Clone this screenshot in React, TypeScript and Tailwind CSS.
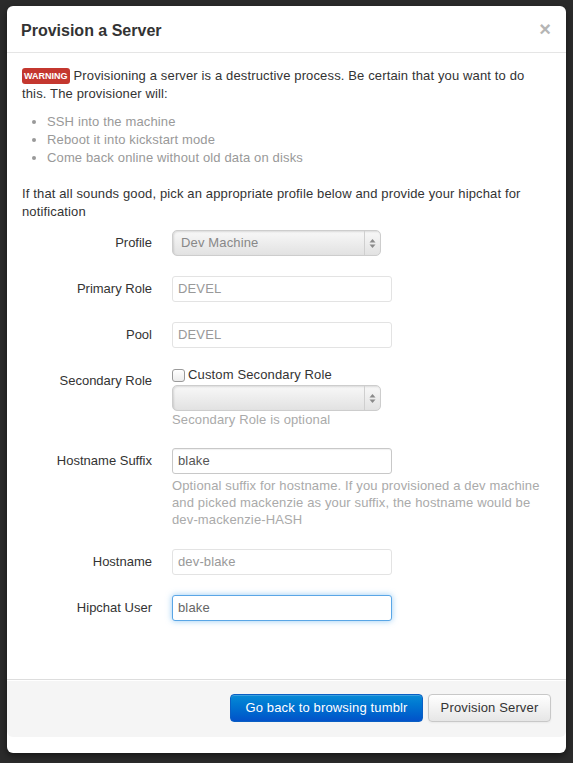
import React from "react";

const font = "font-['Liberation_Sans',Arial,sans-serif]";

interface RowProps {
  label: string;
  labelPad?: string;
  className?: string;
  children: React.ReactNode;
}

const Row = ({ label, labelPad = "pt-[4px]", className = "", children }: RowProps) => (
  <div className={`flex ${className}`}>
    <div className={`w-[130px] shrink-0 text-right leading-[18px] tracking-normal text-[#333] ${labelPad}`}>{label}</div>
    <div className="ml-[20px] w-[379px]">{children}</div>
  </div>
);

const SelectBox = ({ value }: { value?: string }) => (
  <div className="flex h-[26px] w-[209px] items-stretch rounded-[5px] border border-[#cdcdcd] bg-gradient-to-b from-[#f8f8f8] to-[#e2e2e2] shadow-[inset_1px_1px_2px_rgba(0,0,0,0.12)]">
    <div className="flex flex-1 items-center pl-[8px] text-[13px] text-[#888]">{value}</div>
    <div className="flex w-[16px] items-center justify-center border-l border-[#cfcfcf]">
      <svg width="7" height="11" viewBox="0 0 7 11">
        <path d="M3.5 1 L6.5 4.5 L0.5 4.5 Z" fill="#8a8a8a" />
        <path d="M3.5 10 L6.5 6.5 L0.5 6.5 Z" fill="#8a8a8a" />
      </svg>
    </div>
  </div>
);

const Field = ({ value, tone = "muted" }: { value: string; tone?: "muted" | "normal" | "focus" }) => {
  const styles = {
    muted: "border-[#e3e3e3] text-[#999]",
    normal: "border-[#c8c8c8] text-[#555] shadow-[inset_0_1px_1px_rgba(0,0,0,0.06)]",
    focus: "border-[#5aa6e6] text-[#666] shadow-[0_0_6px_rgba(82,168,236,0.6)]",
  }[tone];
  return (
    <div className={`flex h-[26px] w-[220px] items-center rounded-[3px] border bg-white px-[5px] text-[13px] ${styles}`}>
      {value}
    </div>
  );
};

export default function App() {
  return (
    <div className={`min-h-[763px] bg-[#2b2b2b] pl-[7px] pt-[6px] text-[13px] ${font}`}>
      <div className="w-[559px] rounded-[6px] bg-white pb-[16px] shadow-[0_3px_7px_rgba(0,0,0,0.5)]">
        {/* header */}
        <div className="flex h-[47px] items-center justify-between border-b border-[#e5e5e5] pl-[14px] pr-[15px]">
          <h3 className="pt-[3px] text-[16px] font-bold text-[#333]">Provision a Server</h3>
          <span className="text-[20px] font-bold leading-none text-[#b5b5b5]">×</span>
        </div>

        {/* body */}
        <div className="px-[15px] pb-[58px] pt-[14px] tracking-[0.14px] text-[#333]">
          <p className="mb-[10px] leading-[18px]">
            <span className="mr-[4px] inline-block h-[16px] rounded-[3px] bg-[#c4372f] px-[2px] align-[1px] text-[9px] font-bold leading-[16px] tracking-normal text-white">
              WARNING
            </span>
            Provisioning a server is a destructive process. Be certain that you want to do this. The provisioner will:
          </p>
          <ul className="mb-[18px] ml-[25px] list-disc leading-[18px] text-[#999]">
            <li>SSH into the machine</li>
            <li>Reboot it into kickstart mode</li>
            <li>Come back online without old data on disks</li>
          </ul>
          <p className="mb-[9px] leading-[18px]">
            If that all sounds good, pick an appropriate profile below and provide your hipchat for notification
          </p>

          <Row label="Profile" className="mb-[20px]">
            <SelectBox value="Dev Machine" />
          </Row>
          <Row label="Primary Role" className="mb-[20px]">
            <Field value="DEVEL" />
          </Row>
          <Row label="Pool" className="mb-[18px]">
            <Field value="DEVEL" />
          </Row>
          <Row label="Secondary Role" labelPad="pt-[6px]" className="mb-[19px]">
            <div className="flex h-[18px] items-center leading-[18px]">
              <span className="mr-[3px] inline-block h-[13px] w-[13px] rounded-[3px] border border-[#9a9a9a] bg-gradient-to-b from-white to-[#ececec]" />
              Custom Secondary Role
            </div>
            <div className="mt-[1px]">
              <SelectBox />
            </div>
            <div className="leading-[18px] text-[#aaa]">Secondary Role is optional</div>
          </Row>
          <Row label="Hostname Suffix" className="mb-[21px]">
            <Field value="blake" tone="normal" />
            <div className="mt-[3px] leading-[17px] text-[#aaa]">
              Optional suffix for hostname. If you provisioned a dev machine and picked mackenzie as your suffix, the hostname would be dev-mackenzie-HASH
            </div>
          </Row>
          <Row label="Hostname" className="mb-[20px]">
            <Field value="dev-blake" />
          </Row>
          <Row label="Hipchat User">
            <Field value="blake" tone="focus" />
          </Row>
        </div>

        {/* footer */}
        <div className="flex justify-end gap-[5px] rounded-b-[6px] border-t border-[#ddd] bg-[#f5f5f5] px-[15px] pb-[15px] pt-[14px] tracking-[0.15px] shadow-[inset_0_1px_0_#fff]">
          <button className="h-[28px] w-[193px] rounded-[4px] border border-[#0a5fc4] bg-gradient-to-b from-[#0a8bd6] to-[#0452c9] text-[13px] text-white shadow-[inset_0_1px_0_rgba(255,255,255,0.2)]">
            Go back to browsing tumblr
          </button>
          <button className="h-[28px] w-[123px] rounded-[4px] border border-[#c8c8c8] bg-gradient-to-b from-white to-[#e6e6e6] text-[13px] text-[#333] shadow-[inset_0_1px_0_rgba(255,255,255,0.2),0_1px_2px_rgba(0,0,0,0.05)]">
            Provision Server
          </button>
        </div>
      </div>
    </div>
  );
}
